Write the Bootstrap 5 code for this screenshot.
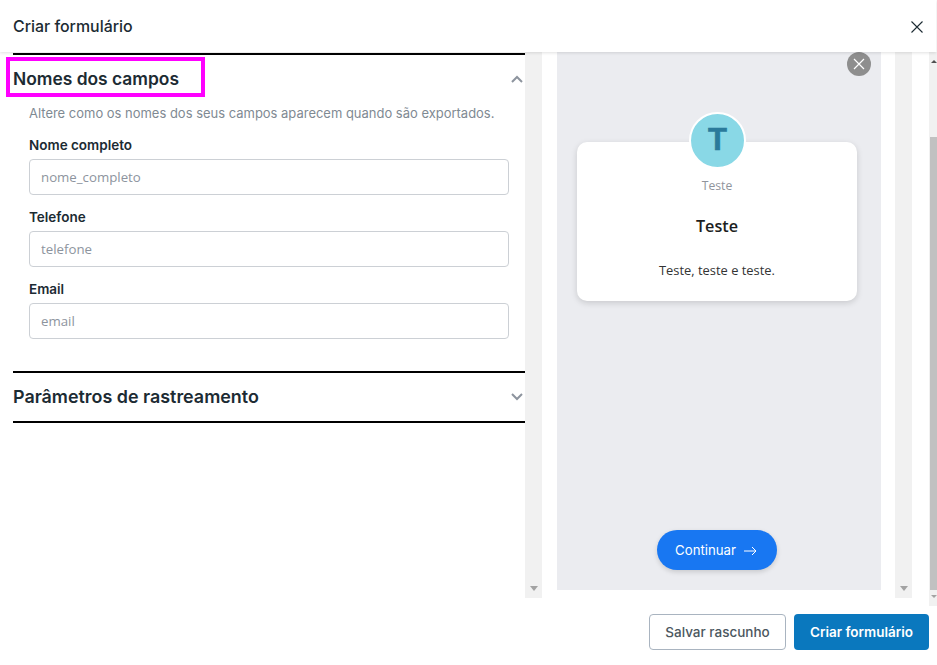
<!DOCTYPE html>
<html lang="pt-BR">
<head>
    <title>Criar formulário</title>
    <meta charset="utf-8">
    <meta name="viewport" content="width=device-width, initial-scale=1">
    <link href="https://cdn.jsdelivr.net/npm/bootstrap@5.3.3/dist/css/bootstrap.min.css" rel="stylesheet">
    <script src="https://cdn.jsdelivr.net/npm/bootstrap@5.3.3/dist/js/bootstrap.bundle.min.js"></script>
    <style>
        html, body { height: 665px; overflow: hidden; background: #fff; }
        body { font-family: Inter, "Liberation Sans", sans-serif; color: #1c2b33; }
        .dlg-head { height: 52px; padding: 2px 13px 0; width: 936px; background: #fff; box-shadow: 0 1px 3px rgba(0,0,0,.12); z-index: 2; }
        .dlg-title { font-size: 15.9px; font-weight: 500; }
        .dlg-main { height: 554px; }
        .pane-left { width: 525px; height: 546px; padding-left: 13px; padding-top: 1px; }
        .sect-line { border-top: 2px solid #000; }
        .sect-head { font-weight: 600; }
        .sect-open { height: 48px; font-size: 17.4px; }
        .sect-closed { height: 48px; font-size: 17.9px; }
        .chev { width: 12px; height: 8px; margin-right: 2px; }
        .sect-body { padding-left: 16px; width: 496px; height: 268px; }
        .sect-desc { font-size: 12.98px; color: #7f8a93; margin-bottom: 13px; line-height: 20px; }
        .fld-label { font-size: 13.5px; font-weight: 600; line-height: 18px; margin-bottom: 5px; }
        .fld-input { height: 36px; font-family: "Open Sans", sans-serif; font-size: 13.25px; padding: 0 11px; border-color: #ccd0d5; border-radius: 4px; margin-bottom: 13px; }
        .fld-input::placeholder { color: #8d949e; }
        .sbar { width: 17px; height: 546px; background: #f1f1f1; }
        .arr-down { width: 0; height: 0; border: 4px solid transparent; border-top: 5px solid #a3a3a3; border-bottom: 0; margin-bottom: 7px; }
        .preview-wrap { width: 353px; padding-left: 15px; }
        .preview { width: 324px; height: 538px; background: #ebecf0; }
        .prev-close { right: 10px; top: 0; width: 24px; height: 24px; background: #8e8e8e; }
        .prev-card { width: 280px; height: 159px; margin-top: 90px; margin-right: 4px; border-radius: 10px; background: #fff; box-shadow: 0 2px 6px rgba(0,0,0,.15); padding-top: 34px; }
        .avatar { width: 57px; height: 57px; top: -30px; left: 112px; background: #89d8e6; border: 2px solid #fff; color: #2a7a9b; font-family: "Liberation Sans", sans-serif; font-size: 31px; font-weight: 700; -webkit-text-stroke: .6px #2a7a9b; }
        .prev-page { font-family: "Open Sans", sans-serif; font-size: 12.2px; color: #90949c; line-height: 18px; margin-top: 1px; }
        .prev-name { font-family: "Open Sans", sans-serif; font-size: 16.2px; font-weight: 600; color: #1c1e21; margin-top: 20px; line-height: 22px; }
        .prev-text { font-family: "Open Sans", sans-serif; font-size: 12.9px; color: #333; margin-top: 23px; line-height: 20px; }
        .prev-btn { bottom: 20px; left: 100px; width: 120px; height: 40px; padding: 2px 2px 0 0; border-radius: 20px; background: #1877f2; color: #fff; font-size: 13.2px; box-shadow: 0 2px 5px rgba(0,0,0,.15); border: 0; gap: 8px; }
        .gap-col { width: 17px; }
        .outer-bar { width: 8px; height: 554px; background: #f1f1f1; }
        .outer-thumb { width: 7px; height: 453px; margin: 85px 0 0 1px; background: #c1c1c1; }
        .arr-up { top: 8px; left: 2px; width: 0; height: 0; border: 3px solid transparent; border-bottom: 3px solid #505050; border-top: 0; }
        .arr-small { bottom: 8px; left: 2px; width: 0; height: 0; border: 3px solid transparent; border-top: 3px solid #a3a3a3; border-bottom: 0; }
        .dlg-foot { padding: 8px 8px 0 0; gap: 8px; }
        .btn-draft, .btn-create { height: 36px; font-size: 13.5px; padding: 0; border-radius: 4px; font-weight: 500; }
        .btn-draft { width: 137px; background: #fff; border: 1px solid #a9b4c0; color: #4b5760; }
        .btn-create { width: 135px; background: #0a78be; border: 0; color: #fff; font-weight: 600; }
        .marker { left: 6px; top: 57px; width: 199px; height: 40px; border: 4px solid #ff00ff; pointer-events: none; z-index: 3; }
    </style>
</head>
<body class="position-relative">

<div class="dlg-head d-flex align-items-center justify-content-between position-relative">
    <div class="dlg-title">Criar formulário</div>
    <svg width="12" height="12" viewBox="0 0 12 12" fill="none" stroke="#1c2b33" stroke-width="1.1"><path d="M.5.5l11 11M11.5.5l-11 11"/></svg>
</div>

<div class="dlg-main d-flex">
    <div class="pane-left">
        <div class="sect-line"></div>
        <div class="sect-open sect-head d-flex align-items-center justify-content-between">
            Nomes dos campos
            <svg class="chev" viewBox="0 0 12 8" fill="none" stroke="#8d949e" stroke-width="2"><path d="M1 7l5-5 5 5"/></svg>
        </div>
        <div class="sect-body">
            <div class="sect-desc">Altere como os nomes dos seus campos aparecem quando são exportados.</div>
            <div class="fld-label">Nome completo</div>
            <input class="form-control fld-input" placeholder="nome_completo">
            <div class="fld-label">Telefone</div>
            <input class="form-control fld-input" placeholder="telefone">
            <div class="fld-label">Email</div>
            <input class="form-control fld-input" placeholder="email">
        </div>
        <div class="sect-line"></div>
        <div class="sect-closed sect-head d-flex align-items-center justify-content-between">
            Parâmetros de rastreamento
            <svg class="chev" viewBox="0 0 12 8" fill="none" stroke="#8d949e" stroke-width="2"><path d="M1 1l5 5 5-5"/></svg>
        </div>
        <div class="sect-line"></div>
    </div>
    <div class="sbar d-flex flex-column align-items-center justify-content-end"><div class="arr-down"></div></div>
    <div class="preview-wrap">
        <div class="preview position-relative d-flex flex-column align-items-center">
            <div class="prev-close position-absolute rounded-circle d-flex align-items-center justify-content-center">
                <svg width="12" height="12" viewBox="0 0 12 12" fill="none" stroke="#fff" stroke-width="1.2"><path d="M1 1l10 10M11 1L1 11"/></svg>
            </div>
            <div class="prev-card position-relative text-center">
                <div class="avatar position-absolute rounded-circle d-flex align-items-center justify-content-center">T</div>
                <div class="prev-page">Teste</div>
                <div class="prev-name">Teste</div>
                <div class="prev-text">Teste, teste e teste.</div>
            </div>
            <button class="prev-btn position-absolute d-flex align-items-center justify-content-center">
                Continuar
                <svg width="13" height="10" viewBox="0 0 13 10" fill="none" stroke="#fff" stroke-width="1"><path d="M0 5h12M8 1l4 4-4 4"/></svg>
            </button>
        </div>
    </div>
    <div class="sbar d-flex flex-column align-items-center justify-content-end"><div class="arr-down"></div></div>
    <div class="gap-col"></div>
    <div class="outer-bar position-relative">
        <div class="arr-up position-absolute"></div>
        <div class="outer-thumb"></div>
        <div class="arr-small position-absolute"></div>
    </div>
</div>

<div class="dlg-foot d-flex justify-content-end">
    <button class="btn btn-draft">Salvar rascunho</button>
    <button class="btn btn-create">Criar formulário</button>
</div>

<div class="marker position-absolute"></div>
</body>
</html>
